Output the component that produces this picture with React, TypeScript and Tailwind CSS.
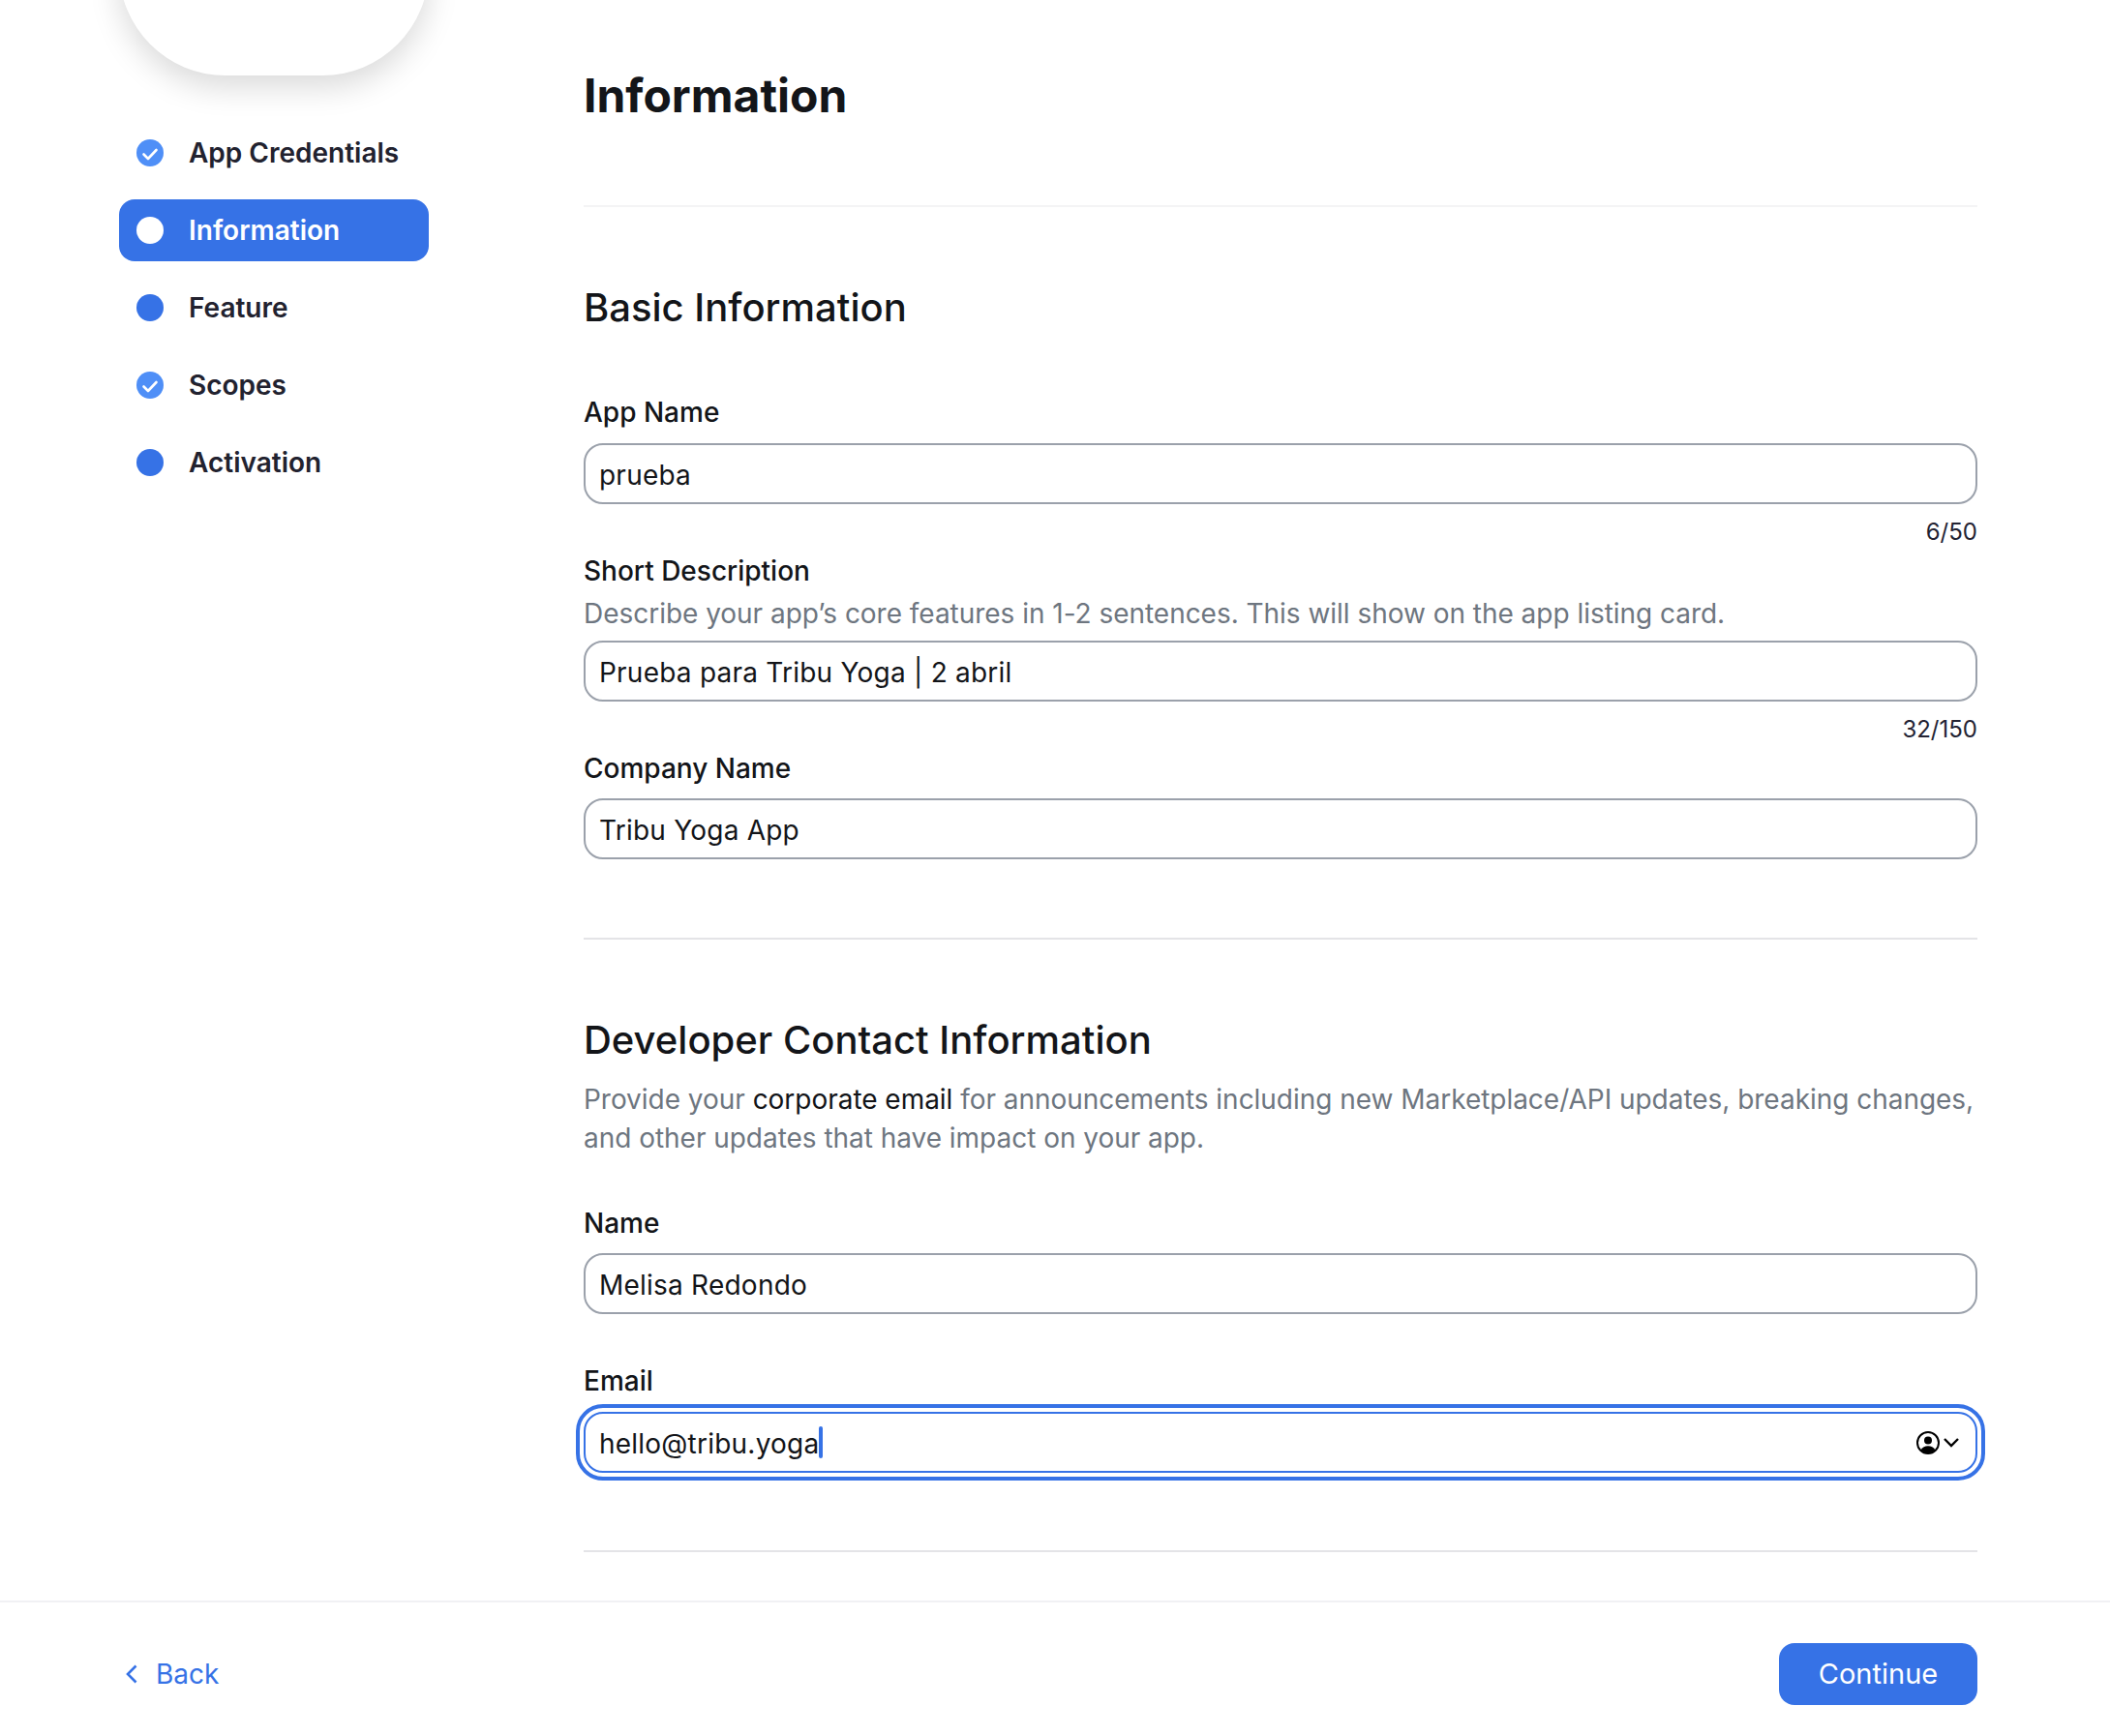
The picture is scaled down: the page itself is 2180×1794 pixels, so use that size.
import React from 'react'

const steps = [
  { label: 'App Credentials', state: 'done' },
  { label: 'Information', state: 'active' },
  { label: 'Feature', state: 'todo' },
  { label: 'Scopes', state: 'done' },
  { label: 'Activation', state: 'todo' }
]

function StepDot({ state }: { state: string }): React.JSX.Element {
  if (state === 'done') {
    return (
      <svg width="28" height="28" viewBox="0 0 28 28" className="shrink-0">
        <circle cx="14" cy="14" r="14" fill="#4f8ff7" />
        <path d="M7.5 15.5l4.5 4.5 8.5-9" fill="none" stroke="#fff" strokeWidth="2.6" strokeLinecap="round" strokeLinejoin="round" />
      </svg>
    )
  }
  return <span className={state === 'active' ? 'h-7 w-7 shrink-0 rounded-full bg-white' : 'h-7 w-7 shrink-0 rounded-full bg-[#3672e6]'} />
}

function Sidebar(): React.JSX.Element {
  return (
    <aside className="w-[320px] shrink-0">
      <div className="mt-[-40px] h-[118px] rounded-b-[110px] bg-white shadow-[0_12px_32px_rgba(0,0,0,0.15)]" />
      <nav className="mt-[48px] flex flex-col gap-[16px]">
        {steps.map((step) => (
          <div
            key={step.label}
            className={
              step.state === 'active'
                ? 'flex h-16 items-center gap-[26px] rounded-[16px] bg-[#3672e6] pl-[18px] text-[28px] font-semibold text-white'
                : 'flex h-16 items-center gap-[26px] rounded-[16px] pl-[18px] text-[28px] font-semibold text-[#22222f]'
            }
          >
            <StepDot state={step.state} />
            <span>{step.label}</span>
          </div>
        ))}
      </nav>
    </aside>
  )
}

function FieldBox({ value }: { value: string }): React.JSX.Element {
  return (
    <div className="flex h-[63px] items-center rounded-[20px] border-2 border-[#9ba1ab] px-[14px] pt-[2px] text-[28px] tracking-[0.008em] text-[#131519]">
      {value}
    </div>
  )
}

function Label({ text, className }: { text: string; className: string }): React.JSX.Element {
  return <div className={'text-[28px] leading-[36px] font-medium text-[#131519] ' + className}>{text}</div>
}

function Counter({ text }: { text: string }): React.JSX.Element {
  return <div className="mt-[13px] text-right text-[24px] leading-[32px] text-[#232333]">{text}</div>
}

function Divider({ className }: { className: string }): React.JSX.Element {
  return <div className={'h-[2px] ' + className} />
}

function EmailField(): React.JSX.Element {
  return (
    <div className="mt-[14px] flex h-[63px] items-center rounded-[20px] border-2 border-[#3672e6] pr-[17px] pl-[14px] text-[28px] tracking-[0.008em] text-[#131519] outline-[4px] outline-offset-[4px] outline-[#3672e6]">
      <span className="pt-[2px]">hello@tribu.yoga</span>
      <span className="h-[33px] w-[4px] rounded-sm bg-[#3672e6]" />
      <span className="ml-auto flex items-center gap-[4px]">
        <svg width="24" height="24" viewBox="0 0 24 24">
          <circle cx="12" cy="12" r="11" fill="none" stroke="#000" strokeWidth="2" />
          <circle cx="12" cy="9.5" r="4" fill="#000" />
          <path d="M4.5 19.5c1.8-3 4.4-4.3 7.5-4.3s5.7 1.3 7.5 4.3a11 11 0 0 1-15 0z" fill="#000" />
        </svg>
        <svg width="16" height="16" viewBox="0 0 16 16">
          <path d="M1 4l7 7 7-7" fill="none" stroke="#000" strokeWidth="2.4" />
        </svg>
      </span>
    </div>
  )
}

export default function App(): React.JSX.Element {
  return (
    <div className="flex h-[1794px] flex-col overflow-hidden bg-white font-['Inter',sans-serif]">
      <div className="flex min-h-0 flex-1 gap-[160px] pr-[137px] pl-[123px]">
        <Sidebar />
        <main className="min-w-0 flex-1">
          <h1 className="mt-[71px] text-[48px] leading-[56px] font-bold text-[#131519]">Information</h1>
          <Divider className="mt-[85px] bg-[#f4f4f5]" />

          <h2 className="mt-[80px] text-[40px] leading-[48px] font-[450] text-[#131519]">Basic Information</h2>
          <Label text="App Name" className="mt-[66px] mb-[14px]" />
          <FieldBox value="prueba" />
          <Counter text="6/50" />
          <Label text="Short Description" className="mt-[6px]" />
          <p className="mt-[8px] mb-[10px] text-[28px] leading-[36px] tracking-[-0.03px] text-[#6e7680]">
            Describe your app’s core features in 1-2 sentences. This will show on the app listing card.
          </p>
          <FieldBox value="Prueba para Tribu Yoga | 2 abril" />
          <Counter text="32/150" />
          <Label text="Company Name" className="mt-[6px] mb-[13px]" />
          <FieldBox value="Tribu Yoga App" />
          <Divider className="mt-[81px] bg-[#e4e4e7]" />

          <h2 className="mt-[80px] text-[40px] leading-[48px] font-[450] text-[#131519]">Developer Contact Information</h2>
          <p className="mt-[17px] text-[28px] leading-[40px] tracking-[-0.03px] text-[#6e7680]">
            Provide your <span className="text-[#131519]">corporate email</span> for announcements including new Marketplace/API updates, breaking changes, and other updates that have impact on your app.
          </p>
          <Label text="Name" className="mt-[50px] mb-[13px]" />
          <FieldBox value="Melisa Redondo" />
          <Label text="Email" className="mt-[51px]" />
          <EmailField />
          <Divider className="mt-[80px] bg-[#e4e4e7]" />
        </main>
      </div>

      <footer className="flex h-[140px] shrink-0 items-start justify-between border-t-2 border-[#f1f1f4] pt-[42px] pr-[137px] pl-[128px]">
        <button className="mt-[11px] flex items-center gap-[17px] text-[28px] text-[#3672e6]">
          <svg width="16" height="24" viewBox="0 0 16 24">
            <path d="M12.5 3.5L4 12l8.500 8.500" fill="none" stroke="#3672e6" strokeWidth="2.6" />
          </svg>
          Back
        </button>
        <button className="flex h-16 w-[205px] items-center justify-center rounded-[16px] bg-[#3672e6] text-[29px] text-white">
          Continue
        </button>
      </footer>
    </div>
  )
}
